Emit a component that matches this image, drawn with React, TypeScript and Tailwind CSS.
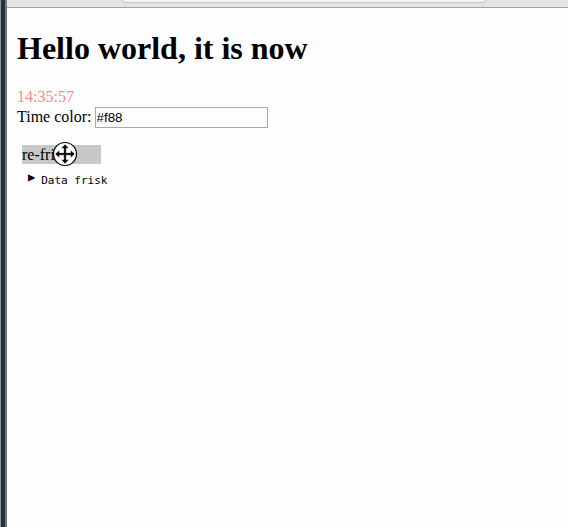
const MoveCursor = () => (
    <svg width="26" height="26" viewBox="0 0 26 26" className="absolute left-[30px] top-[-4px]">
        <circle cx="13" cy="13" r="11.5" fill="white" stroke="black" strokeWidth="1.2" />
        <path
            d="M13 3 L17 7.5 L14.3 7.5 L14.3 11.7 L18.5 11.7 L18.5 9 L23 13 L18.5 17 L18.5 14.3 L14.3 14.3 L14.3 18.5 L17 18.5 L13 23 L9 18.5 L11.7 18.5 L11.7 14.3 L7.5 14.3 L7.5 17 L3 13 L7.5 9 L7.5 11.7 L11.7 11.7 L11.7 7.5 L9 7.5 Z"
            fill="black"
            stroke="white"
            strokeWidth="0.6"
        />
    </svg>
);

export default function App() {
    return (
        <div className="flex h-[527px] w-[568px] overflow-hidden bg-[#fdfdfd]">
            {/* window edge */}
            <div className="flex w-[7px] shrink-0">
                <div className="w-[1px] bg-[#8a9499]"></div>
                <div className="w-[4px] bg-[#22323b]"></div>
                <div className="w-[2px] bg-[#6d7a80]"></div>
            </div>

            <div className="flex flex-1 flex-col">
                {/* browser chrome remnant */}
                <div className="relative h-[7px] shrink-0 border-b border-[#a3a3a3] bg-[#e4e4e4] box-content">
                    <div className="absolute left-[115px] top-[-6px] h-[9px] w-[364px] rounded-b-[3px] border border-[#c4c4c4] bg-[#f4f4f4]"></div>
                </div>

                <div className="flex flex-col pl-[10px] font-['Liberation_Serif',serif] text-black">
                    <h1 className="mt-[22px] mb-[21px] text-[32px] font-bold leading-[37px]">
                        Hello world, it is now
                    </h1>
                    <div className="text-[16px] leading-[18px] text-[#f88]">14:35:57</div>
                    <div className="flex h-[22px] items-center gap-[3px] text-[16px]">
                        <span>Time color:</span>
                        <input
                            readOnly
                            value="#f88"
                            className="h-[21px] w-[173px] border border-[#a9a9a9] px-[1px] font-['Liberation_Sans',sans-serif] text-[13.33px] outline-none"
                        />
                    </div>

                    <div className="relative mt-[17px] ml-[5px]">
                        <button className="flex h-[19px] w-[79px] items-center bg-[#c8c8c8] text-[16px] leading-[19px]">
                            re-frisk
                        </button>
                        <MoveCursor />
                    </div>

                    <div className="mt-[7px] ml-[11px] flex items-center gap-[6px] font-['DejaVu_Sans_Mono',monospace] text-[11px] leading-[14px]">
                        <span className="mt-[-6px] text-[12px]">▶</span>
                        <span className="mt-[3px]">Data frisk</span>
                    </div>
                </div>
            </div>
        </div>
    );
}
